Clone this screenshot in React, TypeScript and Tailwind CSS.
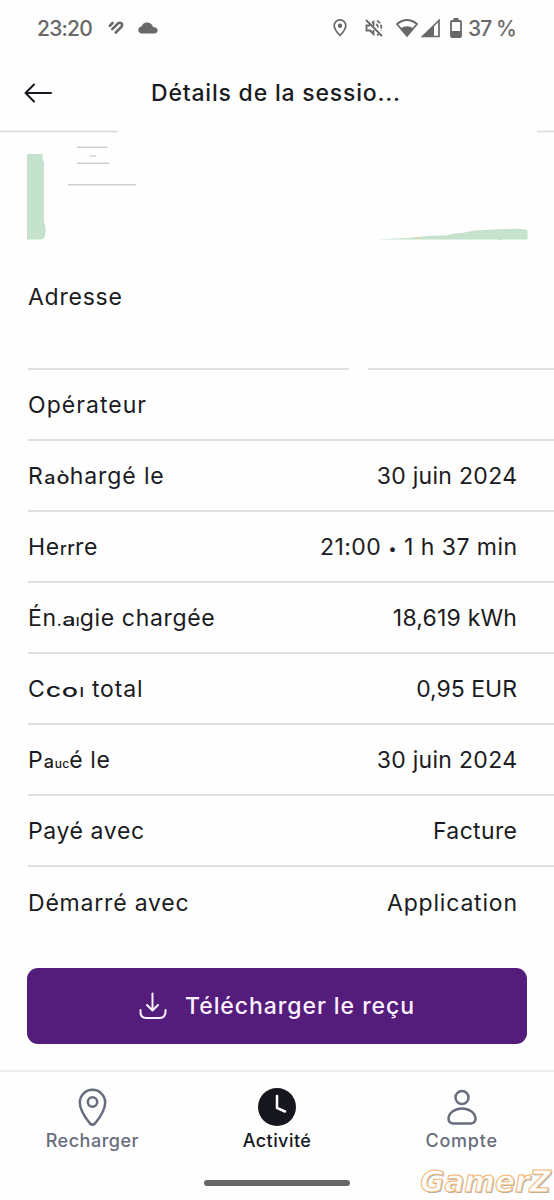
import type { ReactNode } from "react";

type Row = { label: ReactNode; value: ReactNode; labelClass?: string; valueClass?: string };

function Bit({ children, className }: { children: ReactNode; className: string }) {
  return <span className={`inline-block text-center leading-none tracking-normal font-medium ${className}`}>{children}</span>;
}

const rows: Row[] = [
  { label: "Opérateur", value: "", labelClass: "tracking-[1.05px]" },
  {
    label: <>R<Bit className="w-[12px] scale-x-110 text-[18px]">a</Bit><Bit className="w-[14px] scale-x-120 text-[18px]">ò</Bit>hargé le</>,
    value: "30 juin 2024",
    labelClass: "tracking-[0.9px]",
    valueClass: "-mr-[0.3px] tracking-[0.3px]",
  },
  {
    label: <>He<Bit className="w-[7px] text-[17px]">r</Bit><Bit className="w-[8px] text-[19px]">r</Bit>re</>,
    value: <>21:00 <span className="inline-block w-[9px] text-center align-[1px] text-[15px]">•</span> 1 h 37 min</>,
    labelClass: "tracking-[0.7px]",
    valueClass: "-mr-[0.45px] tracking-[0.45px]",
  },
  {
    label: <>Én<Bit className="w-[5px] text-[16px]">.</Bit><Bit className="w-[14px] scale-x-130 text-[18px]">a</Bit><Bit className="w-[4px] text-[15px]">ı</Bit>gie chargée</>,
    value: "18,619 kWh",
    labelClass: "tracking-[0.65px]",
    valueClass: "-mr-[0.2px] tracking-[0.2px]",
  },
  {
    label: <>C<Bit className="w-[15px] scale-x-140 text-[19px]">c</Bit><Bit className="w-[18px] scale-x-150 text-[18px]">o</Bit><Bit className="w-[6px] text-[18px]">ı</Bit> total</>,
    value: "0,95 EUR",
    labelClass: "tracking-[0.85px]",
  },
  {
    label: <>P<Bit className="w-[11px] text-[18px]">a</Bit><Bit className="w-[8px] text-[12px]">u</Bit><Bit className="w-[7px] text-[12px]">c</Bit>é le</>,
    value: "30 juin 2024",
    labelClass: "tracking-[0.6px]",
    valueClass: "-mr-[0.3px] tracking-[0.3px]",
  },
  { label: "Payé avec", value: "Facture", labelClass: "tracking-[0.6px]", valueClass: "-mr-[0.35px] tracking-[0.35px]" },
  { label: "Démarré avec", value: "Application", labelClass: "tracking-[0.8px]", valueClass: "-mr-[0.8px] tracking-[0.8px]" },
];

function StatusBar() {
  return (
    <div className="flex h-[56px] items-center pl-[37px] text-[21px] font-medium text-[#686868]">
      <span className="w-[72px] pt-px tracking-[-0.8px]">23:20</span>
      <svg width="16" height="14" viewBox="0 0 16 14" fill="none" stroke="#686868" strokeWidth="2.6" strokeLinecap="round" className="-ml-px">
        <path d="M1.8 4.8L4.5 2M4.3 8.2L10.3 2.2M7.8 11.5L13.8 5.3Q14.8 2 11.7 1.7" />
      </svg>
      <svg width="20" height="12" viewBox="0 0 20 12" fill="#686868" className="ml-[14px]">
        <path d="M4 11.5Q0 11 .3 7.7Q.6 4.9 3.5 4.5Q5 .5 9 .5Q13.7.6 15 5Q19.4 5.2 19.7 8.4Q19.5 11.4 16 11.5Z" />
      </svg>
      <svg width="14" height="18" viewBox="0 0 14 18" className="ml-[175px]">
        <path d="M7 16.5Q1.2 10.5 1.2 6.7A5.8 5.8 0 0 1 12.8 6.7Q12.8 10.5 7 16.5Z" fill="none" stroke="#686868" strokeWidth="1.7" />
        <circle cx="7" cy="6.7" r="2.2" fill="#686868" />
      </svg>
      <svg width="18" height="18" viewBox="0 0 18 18" fill="none" stroke="#686868" strokeWidth="1.8" className="ml-[18px]">
        <path d="M1 1L17 17M7 4L8.5 2.800V7M8.500 11V15L5 11.500H1.500V6.500H5" />
        <path d="M12 1.700A7.500 7.500 0 0 1 15.800 11.500M11.300 5Q13.800 7 12.800 10M12 16Q13 15.800 14 15" strokeDasharray="4 1.500" />
      </svg>
      <svg width="22" height="19" viewBox="0 0 22 19" className="ml-[13px]">
        <path d="M1 5Q11-3 21 5L11 17Z" fill="none" stroke="#686868" strokeWidth="1.7" />
        <path d="M4.800 9Q11 5.500 17.200 9L11 17.500Z" fill="#686868" />
      </svg>
      <svg width="19" height="19" viewBox="0 0 19 19" className="ml-[3px]">
        <path d="M1.5 17.5L18 1.5V17.5Z" fill="none" stroke="#686868" strokeWidth="1.7" />
        <path d="M1 18L13 6V18Z" fill="#686868" />
      </svg>
      <svg width="12" height="20" viewBox="0 0 12 20" className="ml-[10px]">
        <rect x="1" y="3" width="10" height="16" rx="1" fill="none" stroke="#686868" strokeWidth="1.8" />
        <path d="M3.5 0H8.5V3H3.5ZM1 13H11V19H1Z" fill="#686868" />
      </svg>
      <span className="ml-[6px] whitespace-nowrap pt-px tracking-[-0.9px]">37 %</span>
    </div>
  );
}

function Chart() {
  return (
    <svg width="554" height="117" viewBox="0 130 554 117" className="block">
      <path d="M0 131.5H118M537 131.5H554" stroke="#d9d9d9" strokeWidth="1.4" />
      <path d="M77 147.3H107.500M77 163.3H109M68 184.800H136" stroke="#cfcfcf" strokeWidth="1.5" />
      <path d="M90 156H96" stroke="#d0d0d0" strokeWidth="1.5" />
      <path d="M27 154H42.500V160Q44 161 44 163V222Q46 226 45.500 233Q45 239 41 239.500H27Z" fill="#c4e2cc" />
      <path d="M27.500 154V240" stroke="#cddbd0" />
      <path d="M376 239.500L411 237.700L427 236L448 235.200L454 233.500L462 233L473 230.700L498 229.300L518 228.700Q527 228.800 527.500 230.500V239.600H502L500 240.500L497 239.600Z" fill="#c4e2cc" />
      <path d="M415 237.800H420" stroke="#e6d19a" />
    </svg>
  );
}

export default function App() {
  return (
    <div className="flex h-[1200px] w-[554px] flex-col overflow-hidden bg-[#fefefe] font-['Inter',sans-serif] text-[#1b1b22]">
      <StatusBar />
      <header className="flex h-[74px] items-center pl-[24px]">
        <svg width="28" height="20" viewBox="0 0 28 20" fill="none" stroke="#17171f" strokeWidth="2" strokeLinecap="round" strokeLinejoin="round">
          <path d="M27 10H2M10 1.500L1.500 10L10 18.500" />
        </svg>
        <h1 className="ml-[99px] whitespace-nowrap text-[23px] font-medium tracking-[0.8px]">Détails de la sessio...</h1>
      </header>
      <Chart />
      <section className="flex h-[121px] items-start pl-[28px] pt-[33px] text-[23px] leading-[34px] tracking-[0.75px]">
        <span>Adresse</span>
      </section>
      <div className="flex h-[2px] pl-[28px]">
        <div className="w-[321px] bg-[#e0e0e3]" />
        <div className="ml-[19px] flex-1 bg-[#e0e0e3]" />
      </div>
      <dl className="text-[23px]">
        {rows.map((row, i) => (
          <div key={i} className={`ml-[28px] flex h-[71px] items-center justify-between whitespace-nowrap pr-[37px] pt-[2px] ${i < 7 ? "border-b-2 border-[#e0e0e3]" : ""}`}>
            <dt className={row.labelClass}>{row.label}</dt>
            <dd className={row.valueClass}>{row.value}</dd>
          </div>
        ))}
      </dl>
      <button className="mx-[27px] mt-[30px] flex h-[76px] shrink-0 items-center rounded-[11px] bg-[#541d7c] pl-[112px] text-[23px] font-medium text-[#fdf0ff]">
        <svg width="28" height="28" viewBox="0 0 28 28" fill="none" stroke="currentColor" strokeWidth="2" strokeLinecap="round" strokeLinejoin="round">
          <path d="M13.500 1.500V18M8 13L13.500 18.500L19 13M1.500 18V20Q1.500 26 7.500 26H20.500Q26 26 26.500 20V18" />
        </svg>
        <span className="ml-[18px] whitespace-nowrap tracking-[0.95px]">Télécharger le reçu</span>
      </button>
      <nav className="relative mt-[26px] flex h-[130px] shrink-0 flex-col border-t-2 border-[#ececee] text-[18px] font-medium text-[#686d7d]">
        <div className="grid h-[86px] grid-cols-3">
          <div className="flex flex-col items-center pt-[16px]">
            <svg width="30" height="38" viewBox="0 0 30 38" fill="none" stroke="currentColor" strokeWidth="2.500" className="translate-x-[0.5px]">
              <path d="M12.500 35.500C8 30 2.300 21.500 2.300 14.500A12.700 12.700 0 0 1 27.700 14.500C27.700 21.500 22 30 17.500 35.500Q15 38 12.500 35.500Z" />
              <circle cx="15" cy="14" r="4.700" />
            </svg>
            <span className="leading-[30px] tracking-[0.5px]">Recharger</span>
          </div>
          <div className="flex flex-col items-center pt-[16px] text-[#15161e]">
            <svg width="38" height="38" viewBox="0 0 38 38"><circle cx="19" cy="19" r="19" fill="currentColor" /><path d="M19 8V20L27 23.500" fill="none" stroke="#fff" strokeWidth="2.500" strokeLinecap="round" /></svg>
            <span className="leading-[30px] tracking-[0.45px]">Activité</span>
          </div>
          <div className="flex flex-col items-center pt-[16px]">
            <svg width="30" height="38" viewBox="0 0 30 38" fill="none" stroke="currentColor" strokeWidth="2.500"><circle cx="15" cy="9.500" r="6.500" /><path d="M6 35.500Q1.500 35 1.500 30.500C2 24.500 8 20.500 15 20.500S28 24.500 28.500 30.500Q28.500 35 24 35.500Z" /></svg>
            <span className="leading-[30px] tracking-[0.8px]">Compte</span>
          </div>
        </div>
        <div className="mx-auto mt-[22px] h-[6px] w-[146px] rounded-full bg-[#666]" />
        <span className="absolute right-[3px] top-[95px] font-['DejaVu_Sans',sans-serif] text-[29.5px] font-bold italic leading-[30px] text-[#fbfbfb] [-webkit-text-stroke:1px_#efb66f] [text-shadow:1px_1px_0.5px_#9aa3b2]">GamerZ</span>
      </nav>
    </div>
  );
}
